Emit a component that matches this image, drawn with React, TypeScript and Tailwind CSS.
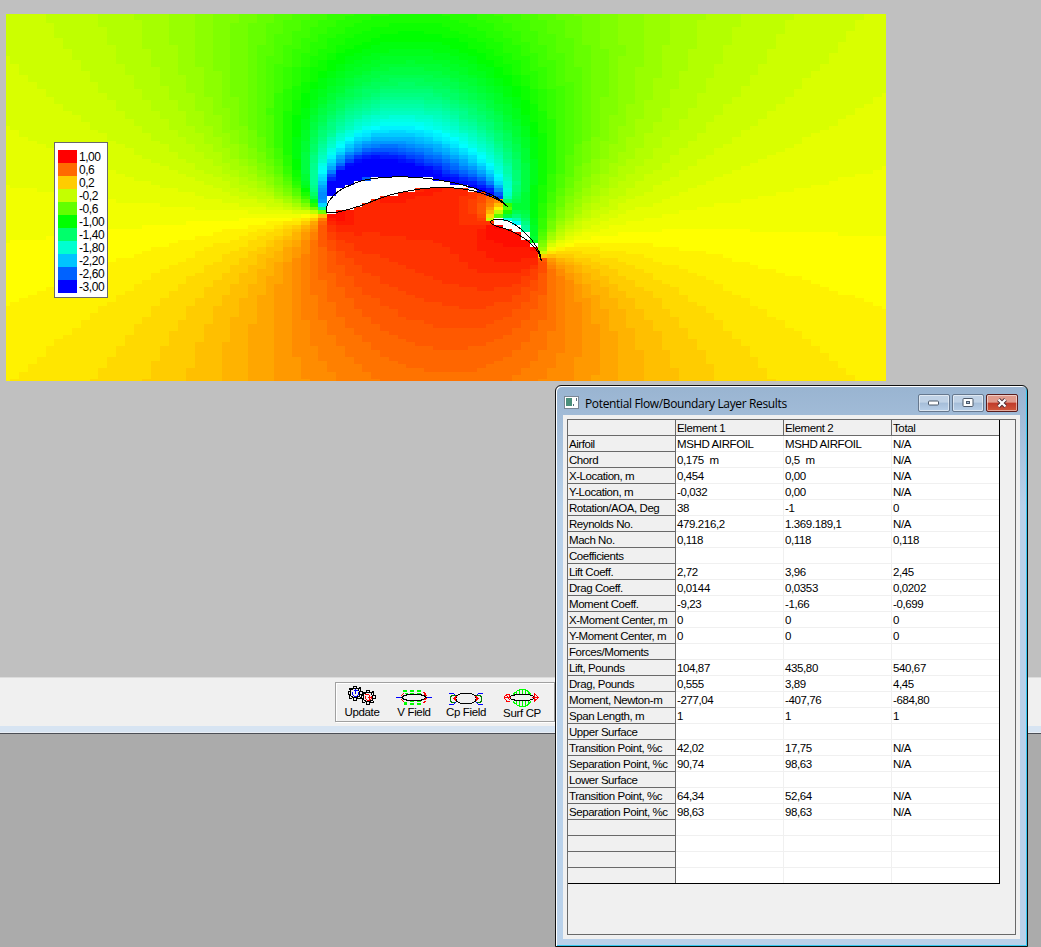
import React from "react";

type Pt = [number, number];
type Panel = { x1: number; y1: number; x2: number; y2: number; len: number; c: number; s: number; xm: number; ym: number };

/* ---------- aerofoil sections, trailing edge -> lower side -> nose -> upper side ---------- */

const MAIN_UPPER: Pt[] = [
  [326.3, 211], [326.3, 206.5], [327.7, 202.5], [330, 199], [333.3, 195.3], [337.5, 191.4], [342, 188.6], [347, 186.2],
  [353.5, 183.3], [360.5, 180.7], [368.5, 178.8], [380, 177.5], [390, 176.8], [400, 176.3], [410, 176.8], [422, 177.6],
  [433, 178.8], [443, 180.5], [453, 182.4], [463, 184.8], [473, 187.6], [482, 190.7], [490, 194], [497, 197.6], [502.5, 201.6], [507.3, 206.3],
];
const MAIN_LOWER: Pt[] = [
  [326.3, 212], [331, 212.3], [336.7, 211.9], [343.5, 210.3], [350, 208.6], [360, 205.5], [370, 201.8], [380, 197.8],
  [390, 194.7], [400, 192.2], [410, 190.3], [422, 188.4], [433, 187.4], [443, 187.2], [453, 187.6], [463, 188.7],
  [473, 190.6], [482, 193.2], [490, 196], [497, 199], [502.3, 202.4], [507.3, 206.3],
];
const FLAP_UPPER: Pt[] = [
  [490.3, 222], [490.8, 220.6], [493.5, 219.3], [497, 219], [501, 219.2], [507, 220.4], [513, 223.2], [520, 228.2],
  [526.5, 234.2], [531.7, 240], [535.7, 246], [538.8, 251.3], [540.5, 256], [540.8, 260.5],
];
const FLAP_LOWER: Pt[] = [
  [490.3, 222], [491.8, 223.8], [496, 226], [503, 227.8], [510, 230.4], [517, 233.8], [524, 238], [530, 242.8],
  [534.6, 247.4], [538, 252.4], [540, 256.8], [540.8, 260.5],
];

const contour = (upper: Pt[], lower: Pt[]): Pt[] => [...[...lower].reverse(), ...upper.slice(1)];

const refine = (pts: Pt[], n: number): Pt[] => {
  const out: Pt[] = [];
  const at = (i: number) => pts[Math.max(0, Math.min(pts.length - 1, i))];
  for (let i = 0; i < pts.length - 1; i++) {
    const [a, b, c, d] = [at(i - 1), at(i), at(i + 1), at(i + 2)];
    for (let k = 0; k < n; k++) {
      const t = k / n;
      const f = (j: 0 | 1) =>
        0.5 * (2 * b[j] + (c[j] - a[j]) * t + (2 * a[j] - 5 * b[j] + 4 * c[j] - d[j]) * t * t + (3 * b[j] - a[j] - 3 * c[j] + d[j]) * t * t * t);
      out.push([f(0), f(1)]);
    }
  }
  out.push(pts[pts.length - 1]);
  return out;
};

const MAIN = contour(MAIN_UPPER, MAIN_LOWER);
const FLAP = contour(FLAP_UPPER, FLAP_LOWER);

/* ---------- source/vortex panel solution ---------- */

const toPanels = (pts: Pt[]): Panel[] =>
  pts.slice(1).map((q, i) => {
    const p = pts[i];
    const dx = q[0] - p[0];
    const dy = -(q[1] - p[1]);
    const len = Math.hypot(dx, dy);
    return { x1: p[0], y1: -p[1], x2: q[0], y2: -q[1], len, c: dx / len, s: dy / len, xm: (p[0] + q[0]) / 2, ym: -(p[1] + q[1]) / 2 };
  });

const sourceVelocity = (p: Panel, x: number, y: number, self: boolean): Pt => {
  const dx = x - p.x1;
  const dy = y - p.y1;
  const lx = dx * p.c + dy * p.s;
  const ly = -dx * p.s + dy * p.c;
  const r1 = lx * lx + ly * ly + 1e-9;
  const r2 = (lx - p.len) * (lx - p.len) + ly * ly + 1e-9;
  const u = self ? 0 : Math.log(r1 / r2) / (4 * Math.PI);
  const v = self ? 0.5 : (Math.atan2(ly, lx - p.len) - Math.atan2(ly, lx)) / (2 * Math.PI);
  return [u * p.c - v * p.s, u * p.s + v * p.c];
};

const solve = (a: number[][]): number[] => {
  const n = a.length;
  for (let i = 0; i < n; i++) {
    let m = i;
    for (let r = i + 1; r < n; r++) if (Math.abs(a[r][i]) > Math.abs(a[m][i])) m = r;
    [a[i], a[m]] = [a[m], a[i]];
    for (let r = i + 1; r < n; r++) {
      const f = a[r][i] / a[i][i];
      if (f !== 0) for (let k = i; k <= n; k++) a[r][k] -= f * a[i][k];
    }
  }
  const x = new Array<number>(n).fill(0);
  for (let i = n - 1; i >= 0; i--) {
    let s = a[i][n];
    for (let k = i + 1; k < n; k++) s -= a[i][k] * x[k];
    x[i] = s / a[i][i];
  }
  return x;
};

const buildFlow = () => {
  const bodies = [toPanels(refine(MAIN, 2)), toPanels(refine(FLAP, 2))];
  const all = bodies.flat();
  const owner = bodies.flatMap((b, i) => b.map(() => i));
  const n = all.length;
  const nb = bodies.length;
  const rows: number[][] = [];
  const tangential: number[][] = [];
  for (let i = 0; i < n; i++) {
    const p = all[i];
    const rn = new Array<number>(n + nb + 1).fill(0);
    const rt = new Array<number>(n + nb + 1).fill(0);
    for (let j = 0; j < n; j++) {
      const [u, v] = sourceVelocity(all[j], p.xm, p.ym, i === j);
      rn[j] = -u * p.s + v * p.c;
      rt[j] = u * p.c + v * p.s;
      rn[n + owner[j]] += -v * p.s - u * p.c;
      rt[n + owner[j]] += v * p.c - u * p.s;
    }
    rn[n + nb] = p.s;
    rt[n + nb] = -p.c;
    rows.push(rn);
    tangential.push(rt);
  }
  let start = 0;
  for (const b of bodies) {
    const end = start + b.length - 1;
    rows.push(tangential[start].map((v, k) => v + tangential[end][k]));
    start = end + 1;
  }
  const sol = solve(rows);
  return (x: number, y: number): number => {
    let u = 1;
    let v = 0;
    for (let j = 0; j < n; j++) {
      const [a, b] = sourceVelocity(all[j], x, y, false);
      const g = sol[n + owner[j]];
      u += sol[j] * a + g * b;
      v += sol[j] * b - g * a;
    }
    // viscous correction: pressure recovers slightly close to the sections
    const r2 = (x - 425) ** 2 + (y + 205) ** 2;
    return 1 - u * u - v * v - 0.01 + 0.06 * Math.exp(-r2 / 48000);
  };
};

const inside = (poly: Pt[], x: number, y: number): boolean => {
  let hit = false;
  for (let i = 0, j = poly.length - 1; i < poly.length; j = i++) {
    const [xi, yi] = poly[i];
    const [xj, yj] = poly[j];
    if (yi > y !== yj > y && x < ((xj - xi) * (y - yi)) / (yj - yi) + xi) hit = !hit;
  }
  return hit;
};

const colour = (cp: number): string => {
  const q = Math.floor(Math.max(-3, Math.min(1, cp)) * 20 + 1e-6) / 20;
  const c = (v: number) => Math.round(255 * Math.max(0, Math.min(1, v)));
  if (q >= 0) return `rgb(255,${c(1 - q)},0)`;
  if (q >= -1) return `rgb(${c(1 + q)},255,0)`;
  if (q >= -2) return `rgb(0,255,${c(-1 - q)})`;
  return `rgb(0,${c(3 + q)},255)`;
};

const X0 = 6;
const Y0 = 14;
const W = 880;
const H = 367;
const DIV = 100;

const buildField = (): [string, string][] => {
  const cp = buildFlow();
  const paths = new Map<string, string>();
  const ex = (k: number) => Math.max(0, Math.min(W, Math.round((k - 0.5) * (W / DIV))));
  const ey = (k: number) => Math.max(0, Math.min(H, Math.round((k - 0.5) * (H / DIV))));
  for (let r = 0; r <= DIV; r++) {
    const y = Y0 + (r * H) / DIV;
    let from = 0;
    let prev = "";
    for (let k = 0; k <= DIV + 1; k++) {
      let col = "";
      if (k <= DIV) {
        const x = X0 + (k * W) / DIV;
        col = inside(MAIN, x, y) || inside(FLAP, x, y) ? "#fff" : colour(cp(x, -y));
      }
      if (col !== prev) {
        if (prev) {
          const d = `M${ex(from)} ${ey(r)}H${ex(k)}V${ey(r + 1)}H${ex(from)}Z`;
          paths.set(prev, (paths.get(prev) ?? "") + d);
        }
        prev = col;
        from = k;
      }
    }
  }
  return [...paths.entries()];
};

const FIELD = buildField();
const outline = (pts: Pt[]) => pts.map(([x, y]) => `${(x - X0 + 0.3).toFixed(1)},${(y - Y0 + 0.3).toFixed(1)}`).join(" ");

const PressureField = () => (
  <svg className="block h-[367px] w-[880px]" viewBox="0 0 880 367" shapeRendering="crispEdges">
    {FIELD.map(([fill, d]) => (
      <path key={fill} fill={fill} d={d} />
    ))}
    <polyline points={outline(MAIN)} fill="none" stroke="#000" />
    <polyline points={outline(FLAP)} fill="none" stroke="#000" />
  </svg>
);

/* ---------- legend ---------- */

const LEGEND: [string, string][] = [
  ["1,00", "bg-[#ff0000]"], ["0,6", "bg-[#ff6b00]"], ["0,2", "bg-[#ffcc00]"], ["-0,2", "bg-[#c4ff00]"],
  ["-0,6", "bg-[#62ff00]"], ["-1,00", "bg-[#00ff00]"], ["-1,40", "bg-[#00ff6b]"], ["-1,80", "bg-[#00ffd0]"],
  ["-2,20", "bg-[#00c4ff]"], ["-2,60", "bg-[#0062ff]"], ["-3,00", "bg-[#0000ff]"],
];

const Legend = () => (
  <div className="absolute top-[142px] left-[54px] flex h-[156px] w-[54px] flex-col border border-[#696969] bg-white pt-[7px] pl-[3px]">
    {LEGEND.map(([label, bg]) => (
      <div key={label} className="flex h-[13px] items-center gap-[2px]">
        <span className={`h-[13px] w-[19px] shrink-0 ${bg}`} />
        <span className="translate-y-[1px] text-[12px] leading-[13px] tracking-[-0.45px] whitespace-nowrap">{label}</span>
      </div>
    ))}
  </div>
);

/* ---------- toolbar ---------- */

const Gear = ({ x, y, inner }: { x: number; y: number; inner: string }) => (
  <g transform={`translate(${x} ${y})`} fill="none" stroke="#000">
    <path d="M5.500 0.500H8.500V2.500H10.500L12.500 1.500V4.500L11.500 5.500H14.500V8.500H11.500V9.500L12.500 12.500H10.500L8.500 11.500V14.500H5.500V11.500L2.500 12.500H1.500V10.500L2.500 8.500H0.500V5.500H2.500V4.500L1.500 2.500H4.500L5.500 2.500Z" fill="#f0f0f0" />
    <path d="M5.500 2.500H9.500L11.500 5.500V9.500L8.500 11.500H5.500L2.500 9.500V4.500Z" />
    <path d="M4.500 5.500V8.500L6.500 10.500H8.500L10.500 8.500V6" stroke={inner} />
  </g>
);

const UpdateIcon = () => (
  <svg className="block" width="30" height="20" viewBox="0 0 30 20" shapeRendering="crispEdges">
    <Gear x={1} y={0} inner="#00f" />
    <path d="M8.500 3v5M6.500 4.500h4" fill="none" stroke="#00f" />
    <Gear x={14} y={4} inner="#f00" />
    <path d="M18 8.500h4M21 11.500h4M22.500 9v5" fill="none" stroke="#f00" />
  </svg>
);

const VFieldIcon = () => (
  <svg className="block" width="36" height="16" viewBox="0 0 36 16" shapeRendering="crispEdges">
    <path d="M6 7.500L8 5.500L13 4.500H23L28 5.500L30 7.500L28 9.500L23 10.500H13L8 9.500Z" fill="none" stroke="#000" />
    <path d="M7 1h4M14 1h4M21 1h4M8 13.500h3M14 14h4M21 14h4" stroke="#0f0" strokeWidth="2" />
    <path d="M9 3.500h3M14 3.500h4M21 3.500h4M8 12.500h3M14 11.500h4M21 11.500h4" stroke="#0f0" />
    <path d="M0 7.500h5M31 7.500h5" stroke="#00f" />
    <path d="M5 5.500l3-2M5 9.500l3 2M27 2.500l3 1M28 4.500l3 1M28 9.500l3-1M27 12.500l3-1" stroke="#f00" fill="none" />
  </svg>
);

const CpFieldIcon = () => (
  <svg className="block" width="36" height="14" viewBox="0 0 36 14" shapeRendering="crispEdges">
    <path d="M7.500 6.500L9 3.500L13 1.500H23L27 3.500L28.500 6.500L27 9.500L23 11.500H13L9 9.500Z" fill="none" stroke="#000" />
    <path d="M1 1.500h4l3 2M1 12.500h4l3-2M35 1.500h-4l-3 2M35 12.500h-4l-3-2" fill="none" stroke="#00f" />
    <path d="M8 3.500H4L2.500 5V9L4 10.500H7M28 3.500H32L33.500 5V9L32 10.500H29" fill="none" stroke="#008000" />
    <path d="M8.500 4L6 6.500L8.500 9.500M27.500 4L30 6.500L27.500 9.500M7.500 5v4M28.500 5v4" fill="none" stroke="#f00" />
  </svg>
);

const SurfCpIcon = () => (
  <svg className="block" width="36" height="18" viewBox="0 0 36 18" shapeRendering="crispEdges">
    <path
      d="M9 5.500L11 3.500L14 1.500L16 0.500H20L23 1.500L25 3.500L27 5.500M12.500 3v3M15.500 1v4M18.500 0v5M21.500 1v4M24.500 3v3M9 12.500L11 14.500L14 16.500L16 17.500H20L23 16.500L25 14.500L27 12.500M12.500 12v3M15.500 12v5M18.500 12v5M21.500 12v5M24.500 12v3"
      fill="none"
      stroke="#0f0"
    />
    <path d="M5 8.500L8 6.500L13 5.500H24L28 6.500L31 8.500L28 10.500L24 11.500H13L8 10.500Z" fill="none" stroke="#000" />
    <path d="M6 5.500H3L0.500 7.500V9.500L3 12.500H6M1 8.500h6M2 6l4 5M5.500 5v3M30 4.500L34.500 8.500L30 12.500V5M28 8.500h7" fill="none" stroke="#f00" />
  </svg>
);

const ToolButton = ({ icon, label, className }: { icon: React.ReactNode; label: string; className: string }) => (
  <div className={`flex shrink-0 flex-col items-center ${className}`}>
    {icon}
    <span className="text-[11.5px] leading-[13px] tracking-[-0.35px] whitespace-nowrap">{label}</span>
  </div>
);

/* ---------- results table ---------- */

const ROWS: string[][] = [
  ["", "Element 1", "Element 2", "Total"],
  ["Airfoil", "MSHD AIRFOIL", "MSHD AIRFOIL", "N/A"],
  ["Chord", "0,175  m", "0,5  m", "N/A"],
  ["X-Location, m", "0,454", "0,00", "N/A"],
  ["Y-Location, m", "-0,032", "0,00", "N/A"],
  ["Rotation/AOA, Deg", "38", "-1", "0"],
  ["Reynolds No.", "479.216,2", "1.369.189,1", "N/A"],
  ["Mach No.", "0,118", "0,118", "0,118"],
  ["Coefficients", "", "", ""],
  ["Lift Coeff.", "2,72", "3,96", "2,45"],
  ["Drag Coeff.", "0,0144", "0,0353", "0,0202"],
  ["Moment Coeff.", "-9,23", "-1,66", "-0,699"],
  ["X-Moment Center, m", "0", "0", "0"],
  ["Y-Moment Center, m", "0", "0", "0"],
  ["Forces/Moments", "", "", ""],
  ["Lift, Pounds", "104,87", "435,80", "540,67"],
  ["Drag, Pounds", "0,555", "3,89", "4,45"],
  ["Moment, Newton-m", "-277,04", "-407,76", "-684,80"],
  ["Span Length, m", "1", "1", "1"],
  ["Upper Surface", "", "", ""],
  ["Transition Point, %c", "42,02", "17,75", "N/A"],
  ["Separation Point, %c", "90,74", "98,63", "N/A"],
  ["Lower Surface", "", "", ""],
  ["Transition Point, %c", "64,34", "52,64", "N/A"],
  ["Separation Point, %c", "98,63", "98,63", "N/A"],
  ["", "", "", ""],
  ["", "", "", ""],
  ["", "", "", ""],
  ["", "", "", ""],
];

const ResultsTable = () => (
  <div className="flex w-[432px] flex-col border-r border-b border-black bg-white text-[11.5px] leading-[15px]">
    {ROWS.map((row, r) => {
      const last = r === ROWS.length - 1;
      return (
        <div key={r} className={`flex ${last ? "h-[15px]" : "h-[16px]"}`}>
          {row.map((cell, c) => {
            const fixed = r === 0 || c === 0;
            const line = fixed ? "border-[#696969] bg-[#f0f0f0]" : "border-[#f0f0f0]";
            const right = c === 3 ? "w-[107px]" : c === 0 || r === 0 ? "w-[108px] border-r border-r-[#696969]" : "w-[108px] border-r";
            const bottom = last ? "" : "border-b";
            const tracking = c === 0 ? "tracking-[-0.44px]" : "tracking-[-0.38px]";
            return (
              <div key={c} className={`overflow-hidden pt-[1px] pl-[1px] whitespace-pre ${line} ${right} ${bottom} ${tracking}`}>
                {cell}
              </div>
            );
          })}
        </div>
      );
    })}
  </div>
);

const CaptionButton = ({ close, children }: { close?: boolean; children: React.ReactNode }) => (
  <div
    className={`flex h-[18px] w-[32px] items-center justify-center rounded-[2px] border shadow-[inset_0_0_0_1px_rgba(255,255,255,0.5)] ${
      close ? "border-[#5a1d1d] bg-linear-to-b from-[#e09a8c] from-45% via-[#c03a2a] via-50% to-[#d0583c]" : "border-[#66788e] bg-linear-to-b from-[#c0d2e6] from-45% via-[#a5bdd8] via-50% to-[#b8cfe8]"
    }`}
  >
    {children}
  </div>
);

const ResultsWindow = () => (
  <div className="absolute top-[385px] left-[555px] flex h-[562px] w-[473px] flex-col rounded-t-[6px] border border-[#101010] bg-linear-to-b from-[#99b4d1] to-[#b9d1ea] to-[120px] shadow-[inset_1px_1px_0_#fff,inset_-1px_-1px_0_#35c8f0]">
    <div className="flex h-[29px] items-center pt-[7px] pr-[9px] pl-[8px]">
      <svg className="-mt-[4px] block shrink-0" width="15" height="13" viewBox="0 0 15 13" shapeRendering="crispEdges">
        <rect x="0.500" y="0.500" width="14" height="12" fill="#fff" stroke="#7a8796" />
        <rect x="2" y="2" width="6" height="8" fill="#4a8f7b" />
        <path d="M9.500 8v2M12.500 2v3" stroke="#5a7080" />
      </svg>
      <span className="ml-[6px] grow font-['Open_Sans','Noto_Sans',sans-serif] text-[12px] leading-[16px] tracking-[-0.35px] whitespace-nowrap">
        Potential Flow/Boundary Layer Results
      </span>
      <div className="-mt-[2px] flex gap-[2px]">
        <CaptionButton>
          <svg width="12" height="6" viewBox="0 0 12 6"><rect x="0.500" y="1" width="10" height="4" rx="1" fill="#fff" stroke="#4d5a6b" /></svg>
        </CaptionButton>
        <CaptionButton>
          <svg width="12" height="10" viewBox="0 0 12 10"><rect x="1" y="0.500" width="10" height="8" rx="1" fill="#fff" stroke="#4d5a6b" /><rect x="4.500" y="3.500" width="3" height="2" fill="#a5bdd8" stroke="#4d5a6b" /></svg>
        </CaptionButton>
        <CaptionButton close>
          <svg width="12" height="10" viewBox="0 0 12 10">
            <path d="M2.500 1.500L9.500 8.500M9.500 1.500L2.500 8.500" stroke="#503038" strokeWidth="4" />
            <path d="M2.500 1.500L9.500 8.500M9.500 1.500L2.500 8.500" stroke="#fff" strokeWidth="2.200" />
          </svg>
        </CaptionButton>
      </div>
    </div>
    <div className="mx-[7px] h-[524px] bg-[#f0f0f0] pt-[4px] pl-[4px]">
      <div className="h-[516px] w-[449px] border border-[#696969] bg-[#f0f0f0]">
        <ResultsTable />
      </div>
    </div>
  </div>
);

export default function App() {
  return (
    <div className="relative flex h-[947px] w-[1041px] flex-col overflow-hidden bg-[#ababab] font-['Liberation_Sans',Arial,sans-serif] text-black">
      <div className="h-[677px] bg-[#c0c0c0] pt-[14px] pl-[6px]">
        <PressureField />
      </div>
      <div className="h-[49px] border-t border-[#dcdcdc] bg-[#f0f0f0] pt-[4px] pl-[335px]">
        <div className="flex h-[40px] w-[220px] items-start border border-[#a0a0a0] shadow-[inset_1px_1px_0_#fff,1px_1px_0_#fff]">
          <ToolButton className="mt-[3px] ml-[8px] w-[36px]" icon={<UpdateIcon />} label="Update" />
          <ToolButton className="mt-[7px] ml-[15px] w-[38px]" icon={<VFieldIcon />} label="V Field" />
          <ToolButton className="mt-[9px] ml-[14px] w-[38px]" icon={<CpFieldIcon />} label="Cp Field" />
          <ToolButton className="mt-[6px] ml-[18px] w-[38px]" icon={<SurfCpIcon />} label="Surf CP" />
        </div>
      </div>
      <div className="h-[8px] border-b border-[#4b4e55] bg-[#d7e4f2] shadow-[inset_0_-1px_0_#e9eef5]" />
      <Legend />
      <ResultsWindow />
    </div>
  );
}
